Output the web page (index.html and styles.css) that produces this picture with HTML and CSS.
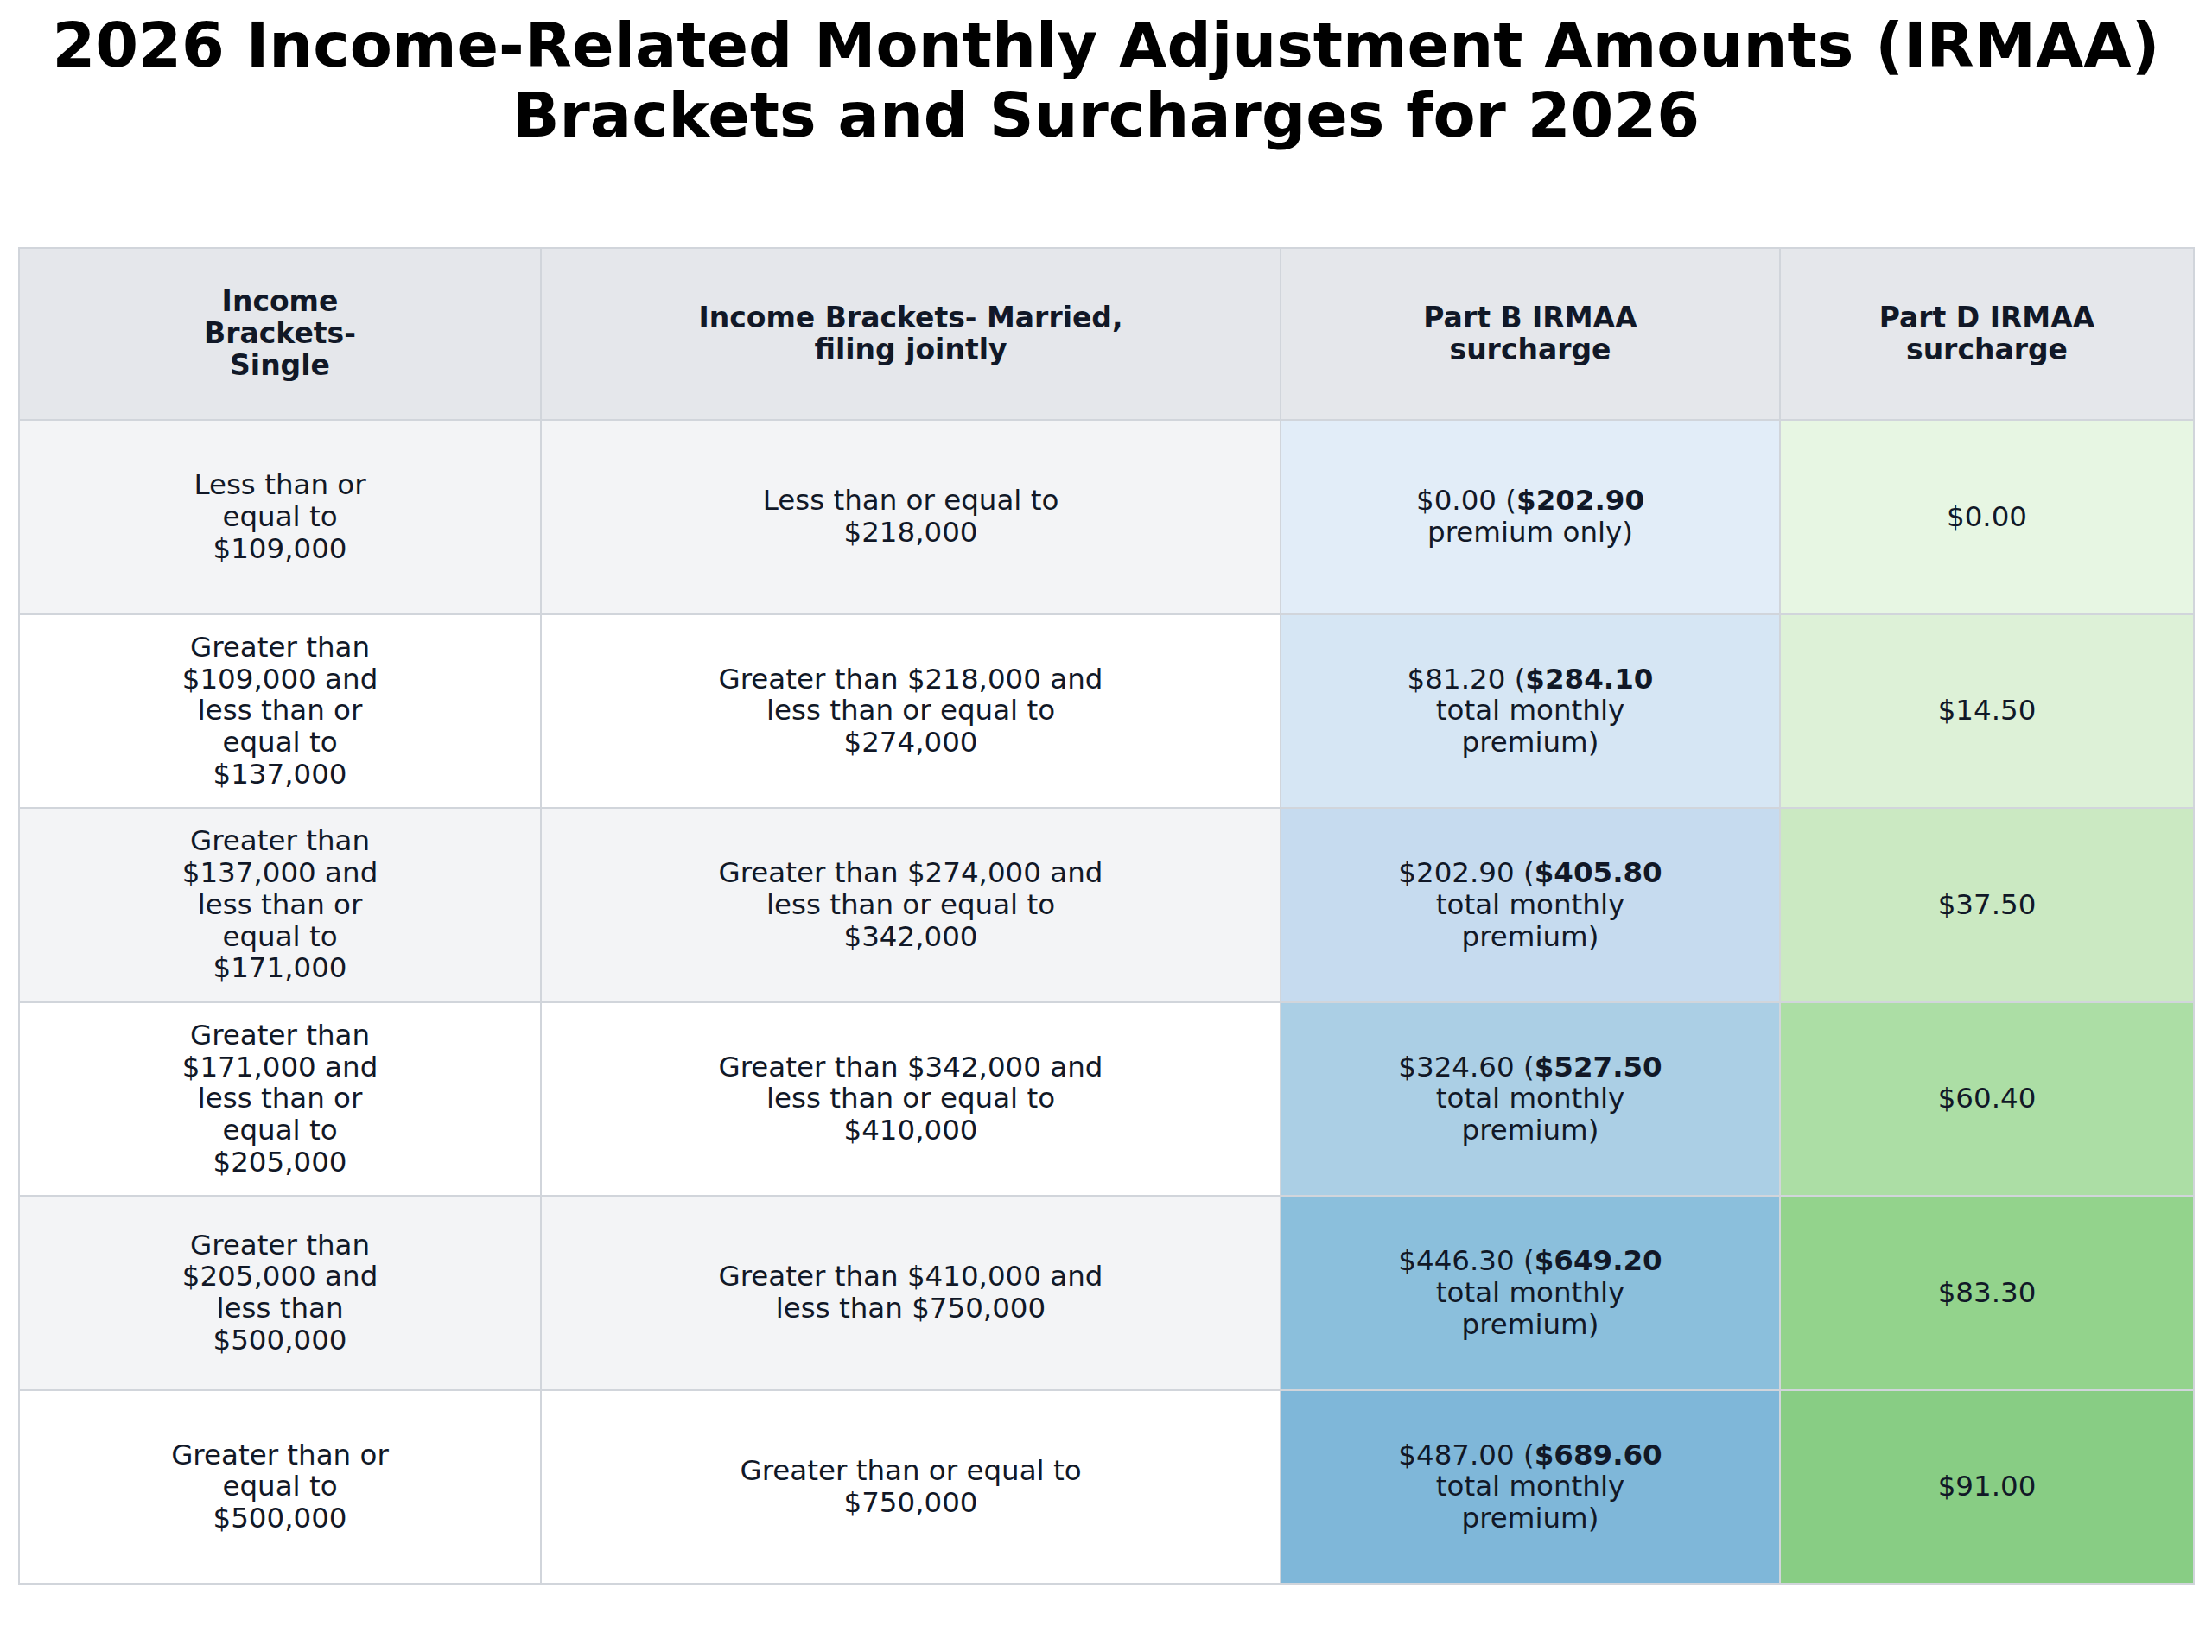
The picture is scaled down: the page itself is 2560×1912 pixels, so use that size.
FILE: index.html
```html
<!DOCTYPE html>
<html lang="en">
<head>
<meta charset="utf-8">
<title>2026 IRMAA Brackets</title>
<link rel="stylesheet" href="styles.css">
</head>
<body>
<h1 class="title">2026 Income-Related Monthly Adjustment Amounts (IRMAA)<br>Brackets and Surcharges for 2026</h1>
<div class="table">
  <div class="cell head"><span>Income<br>Brackets-<br>Single</span></div>
  <div class="cell head"><span>Income Brackets- Married,<br>filing jointly</span></div>
  <div class="cell head"><span>Part B IRMAA<br>surcharge</span></div>
  <div class="cell head"><span>Part D IRMAA<br>surcharge</span></div>

  <div class="cell odd"><span>Less than or<br>equal to<br>$109,000</span></div>
  <div class="cell odd"><span>Less than or equal to<br>$218,000</span></div>
  <div class="cell b1"><span>$0.00 (<b>$202.90</b><br>premium only)</span></div>
  <div class="cell d1"><span>$0.00</span></div>

  <div class="cell even"><span>Greater than<br>$109,000 and<br>less than or<br>equal to<br>$137,000</span></div>
  <div class="cell even"><span>Greater than $218,000 and<br>less than or equal to<br>$274,000</span></div>
  <div class="cell b2"><span>$81.20 (<b>$284.10</b><br>total monthly<br>premium)</span></div>
  <div class="cell d2"><span>$14.50</span></div>

  <div class="cell odd"><span>Greater than<br>$137,000 and<br>less than or<br>equal to<br>$171,000</span></div>
  <div class="cell odd"><span>Greater than $274,000 and<br>less than or equal to<br>$342,000</span></div>
  <div class="cell b3"><span>$202.90 (<b>$405.80</b><br>total monthly<br>premium)</span></div>
  <div class="cell d3"><span>$37.50</span></div>

  <div class="cell even"><span>Greater than<br>$171,000 and<br>less than or<br>equal to<br>$205,000</span></div>
  <div class="cell even"><span>Greater than $342,000 and<br>less than or equal to<br>$410,000</span></div>
  <div class="cell b4"><span>$324.60 (<b>$527.50</b><br>total monthly<br>premium)</span></div>
  <div class="cell d4"><span>$60.40</span></div>

  <div class="cell odd"><span>Greater than<br>$205,000 and<br>less than<br>$500,000</span></div>
  <div class="cell odd"><span>Greater than $410,000 and<br>less than $750,000</span></div>
  <div class="cell b5"><span>$446.30 (<b>$649.20</b><br>total monthly<br>premium)</span></div>
  <div class="cell d5"><span>$83.30</span></div>

  <div class="cell even"><span>Greater than or<br>equal to<br>$500,000</span></div>
  <div class="cell even"><span>Greater than or equal to<br>$750,000</span></div>
  <div class="cell b6"><span>$487.00 (<b>$689.60</b><br>total monthly<br>premium)</span></div>
  <div class="cell d6"><span>$91.00</span></div>
</div>
</body>
</html>
```
FILE: styles.css
```css
html, body {
  margin: 0;
  padding: 0;
  background: #ffffff;
}
body {
  font-family: "DejaVu Sans", "Liberation Sans", sans-serif;
  color: #111827;
}
.title {
  margin: 12px 0 0 0;
  font-size: 71.6px;
  line-height: 81px;
  font-weight: bold;
  text-align: center;
  color: #000000;
}
.table {
  margin: 112px 0 0 21px;
  width: 2519px;
  box-sizing: border-box;
  padding: 2px;
  display: grid;
  grid-template-columns: 602px 854px 576px 477px;
  grid-template-rows: 197px repeat(6, 222.5px);
  gap: 2px;
  background: #d1d5db;
}
.cell {
  display: flex;
  align-items: center;
  justify-content: center;
  text-align: center;
  font-size: 32.5px;
  line-height: 36.8px;
  color: #111827;
}
.cell b { font-weight: bold; }
.head {
  background: #e5e7eb;
  font-weight: bold;
  font-size: 33px;
}
.odd { background: #f3f4f6; }
.even { background: #ffffff; }
.b1 { background: #e2edf8; }
.b2 { background: #d6e6f4; }
.b3 { background: #c6dbef; }
.b4 { background: #abcfe5; }
.b5 { background: #8bbfdc; }
.b6 { background: #7fb7d9; }
.d1 { background: #e7f6e3; }
.d2 { background: #ddf1d7; }
.d3 { background: #cbe9c2; }
.d4 { background: #acdea5; }
.d5 { background: #93d38c; }
.d6 { background: #88cd84; }
```
